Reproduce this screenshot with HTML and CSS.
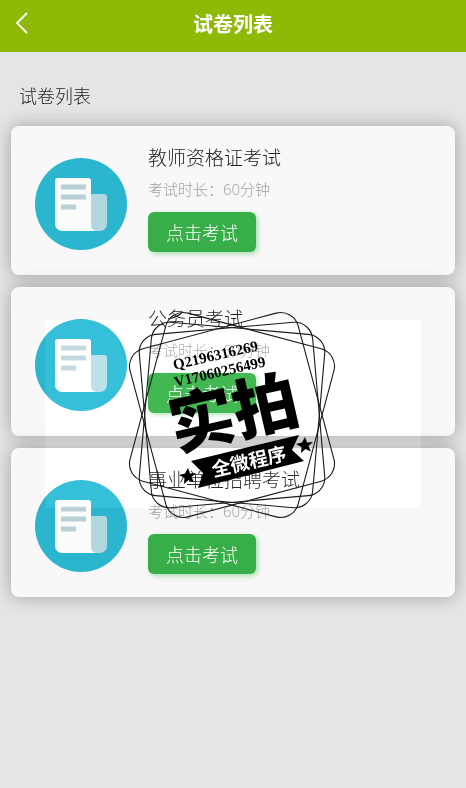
FILE: index.html
```html
<!DOCTYPE html>
<html lang="zh-CN">
<head>
    <meta charset="UTF-8">
    <meta name="viewport" content="width=device-width, initial-scale=1.0">
    <title>试卷列表</title>
    <link rel="stylesheet" href="styles.css">
</head>
<body>
    <!-- shared icon of an exam paper -->
    <svg class="sprite" aria-hidden="true">
        <symbol id="paper" viewBox="0 0 92 92">
            <circle cx="46" cy="46" r="46" fill="#2bb5ce"/>
            <path d="M56 36h13a3 3 0 0 1 3 3v27a7 7 0 0 1-7 7H54z" fill="#b1d8e1"/>
            <path d="M23 20h30a3 3 0 0 1 3 3v43q0 7 6 7H27a7 7 0 0 1-7-7V23a3 3 0 0 1 3-3z" fill="#fafcfc"/>
            <path d="M26 26.500h25v5H26zM26 36.500h25v5H26zM26 46.500h15v5H26z" fill="#b8d0d6"/>
        </symbol>
    </svg>

    <header class="topbar">
        <a class="back" href="#" aria-label="返回">
            <svg width="14" height="24" viewBox="0 0 14 24"><path d="M12 1L2 11l10 10" fill="none" stroke="#fff" stroke-width="1.800"/></svg>
        </a>
        <h1>试卷列表</h1>
    </header>

    <main class="page">
        <h2>试卷列表</h2>

        <ul class="exam-list">
            <li class="exam">
                <svg class="exam-icon" aria-hidden="true"><use href="#paper"/></svg>
                <div class="exam-info">
                    <h3>教师资格证考试</h3>
                    <p>考试时长：60分钟</p>
                    <button type="button">点击考试</button>
                </div>
            </li>
            <li class="exam">
                <svg class="exam-icon" aria-hidden="true"><use href="#paper"/></svg>
                <div class="exam-info">
                    <h3>公务员考试</h3>
                    <p>考试时长：60分钟</p>
                    <button type="button">点击考试</button>
                </div>
            </li>
            <li class="exam">
                <svg class="exam-icon" aria-hidden="true"><use href="#paper"/></svg>
                <div class="exam-info">
                    <h3>事业单位招聘考试</h3>
                    <p>考试时长：60分钟</p>
                    <button type="button">点击考试</button>
                </div>
            </li>
        </ul>
    </main>

    <!-- watermark stamp over the list -->
    <div class="watermark-veil"></div>
    <svg class="watermark" viewBox="0 0 210 210">
        <g transform="translate(104 105)">
            <g fill="none" stroke="#1a1a1a" stroke-width="1.100">
                <rect x="-87" y="-87" width="174" height="174" rx="18" transform="rotate(-15)"/>
                <rect x="-87" y="-87" width="174" height="174" rx="18" transform="rotate(-5)"/>
                <rect x="-87" y="-87" width="174" height="174" rx="18" transform="rotate(5)"/>
                <rect x="-87" y="-87" width="174" height="174" rx="18" transform="rotate(15)"/>
            </g>
            <g transform="rotate(-13)">
                <text class="stamp-id" x="-46" y="-57">Q2196316269</text>
                <text class="stamp-id" x="-49" y="-40">V17060256499</text>
                <text class="stamp-main" x="2" y="22">实拍</text>
            </g>
            <path d="M-41 46L67 20l-7 15 12 11-106 27 5-15z"/>
            <path id="star" d="M73 22l2 5.500 6-.5-4.500 4 2.500 5.500-5.500-2.500-4.500 4 .5-6-5.500-3 6-1.500z"/>
            <use href="#star" x="-117" y="31"/>
            <g transform="rotate(-13)">
                <text class="stamp-sub" x="6" y="56">全微程序</text>
            </g>
        </g>
    </svg>
</body>
</html>
```

FILE: styles.css
```css
* {
    margin: 0;
    padding: 0;
    box-sizing: border-box;
}

body {
    position: relative;
    min-height: 100vh;
    background: #e5e5e5;
    color: #222;
    font-family: "Open Sans", "Noto Sans CJK SC", sans-serif;
    font-weight: 300;
}

.sprite {
    position: absolute;
    width: 0;
    height: 0;
}

.topbar {
    display: grid;
    grid-template-columns: 48px 1fr 48px;
    align-items: center;
    height: 52px;
    padding-bottom: 2px;
    background: #8eba07;
    color: #fff;
}

.back {
    display: flex;
    padding: 0 0 2px 15px;
}

.topbar h1 {
    font-size: 20px;
    line-height: 28px;
    font-weight: 700;
    text-align: center;
}

.page {
    padding: 30px 11px;
}

.page h2 {
    padding-left: 8px;
    margin-bottom: 16px;
    font-size: 18px;
    line-height: 28px;
    font-weight: 300;
}

.exam-list {
    display: flex;
    flex-direction: column;
    gap: 12px;
    list-style: none;
}

.exam {
    display: flex;
    gap: 21px;
    padding: 18px 24px 23px;
    background: #f8f8f8;
    border-radius: 8px;
    box-shadow: 0 0 18px rgba(0, 0, 0, 0.3);
}

.exam-icon {
    width: 92px;
    height: 92px;
    margin-top: 14px;
}

.exam h3 {
    font-size: 19px;
    line-height: 28px;
    font-weight: 300;
}

.exam p {
    margin: 6px 0 12px;
    color: #a0a0a0;
    font-size: 15px;
    line-height: 22px;
}

.exam button {
    display: block;
    width: 108px;
    height: 40px;
    padding-top: 2px;
    border: none;
    border-radius: 6px;
    background: #38ae48;
    box-shadow: 2px 2px 5px rgba(56, 174, 72, 0.4);
    color: #fff;
    font: inherit;
    font-size: 18px;
    line-height: 28px;
}

.watermark-veil {
    position: absolute;
    top: 320px;
    left: 50%;
    width: 375px;
    height: 188px;
    transform: translateX(-50%);
    background: #0a0a0a;
    mix-blend-mode: plus-lighter;
    pointer-events: none;
}

.watermark {
    position: absolute;
    top: 310px;
    left: 50%;
    width: 210px;
    height: 210px;
    transform: translateX(-50%);
    pointer-events: none;
}

.watermark text {
    fill: #000;
}

.watermark .stamp-id {
    font: 700 15px "Liberation Serif", serif;
}

.watermark .stamp-main {
    font-size: 65px;
    font-weight: 900;
    text-anchor: middle;
}

.watermark .stamp-sub {
    fill: #fff;
    font-size: 19px;
    font-weight: 700;
    text-anchor: middle;
}
```
